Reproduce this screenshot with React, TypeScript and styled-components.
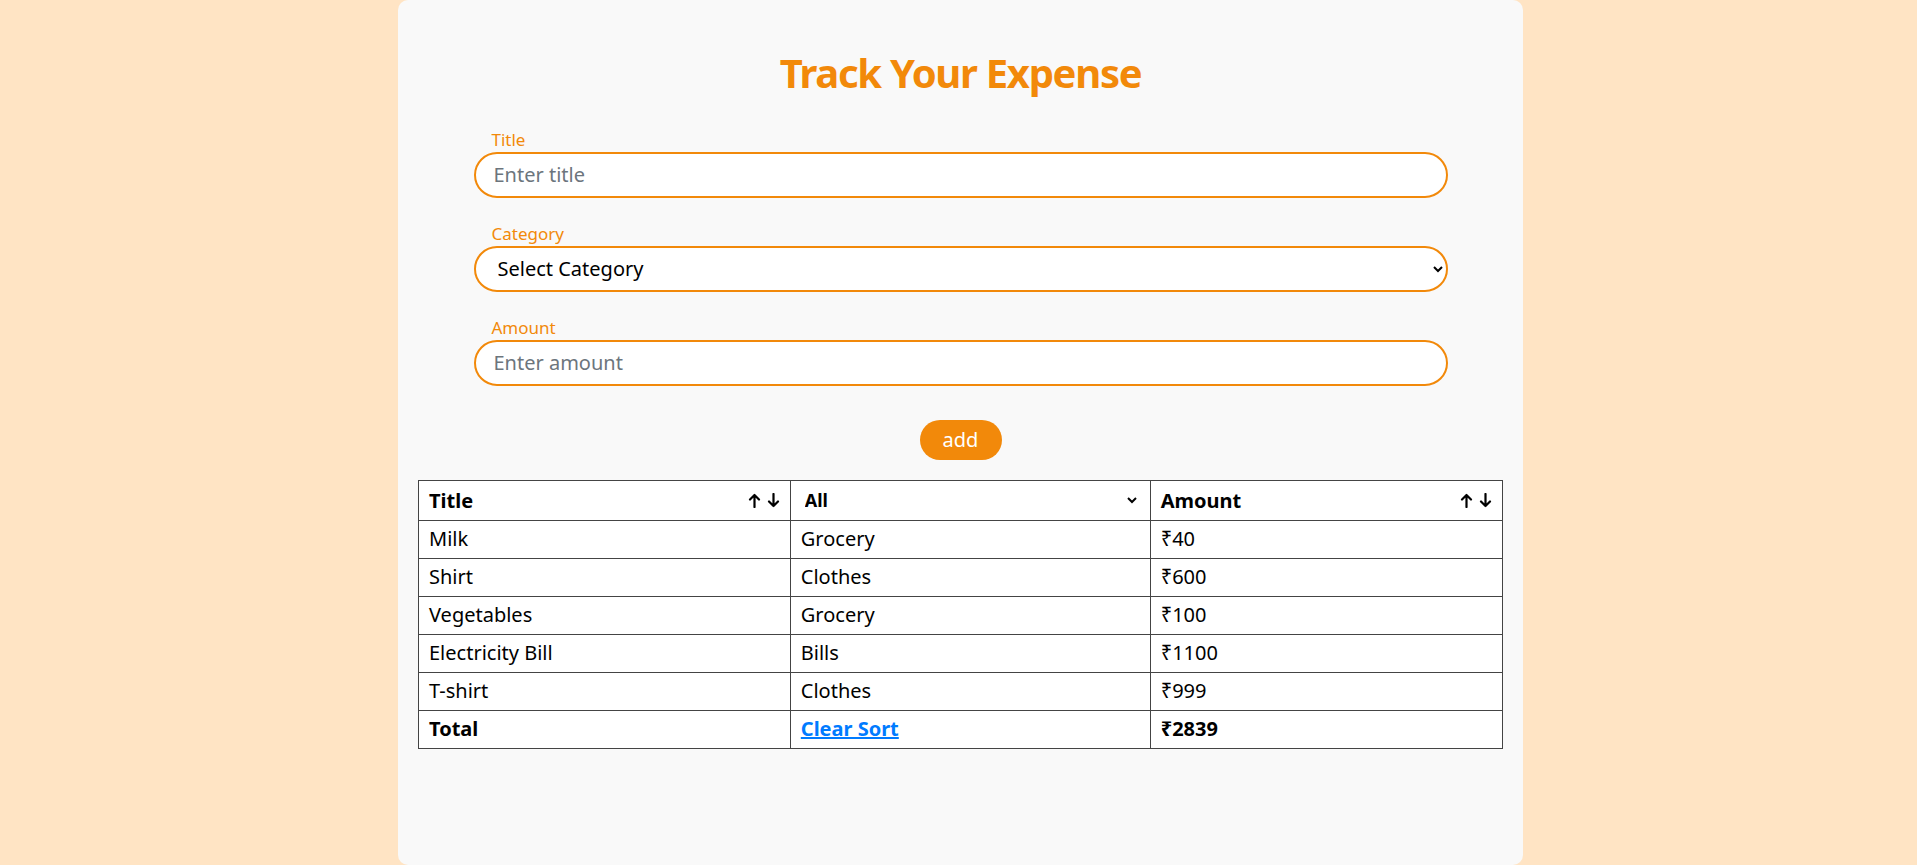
import React from "react";
import styled, { createGlobalStyle } from "styled-components";

interface Expense {
  id: number;
  title: string;
  category: string;
  amount: number;
}

const expenses: Expense[] = [
  { id: 1, title: "Milk", category: "Grocery", amount: 40 },
  { id: 2, title: "Shirt", category: "Clothes", amount: 600 },
  { id: 3, title: "Vegetables", category: "Grocery", amount: 100 },
  { id: 4, title: "Electricity Bill", category: "Bills", amount: 1100 },
  { id: 5, title: "T-shirt", category: "Clothes", amount: 999 },
];

const ORANGE = "#f2890a";

const GlobalStyle = createGlobalStyle`
  body {
    margin: 0;
    padding-left: 4px;
    background: #ffe4c4;
    font-family: "Noto Sans", "DejaVu Sans", sans-serif;
  }
  * {
    box-sizing: border-box;
  }
`;

const SortArrows = () => (
  <Arrows>
    <svg width="13" height="15" viewBox="0 0 13 15" fill="none" stroke="#000" strokeWidth="2.2" strokeLinecap="round" strokeLinejoin="round">
      <path d="M6.5 14V2M2 6.5L6.5 2L11 6.5" />
    </svg>
    <svg width="13" height="15" viewBox="0 0 13 15" fill="none" stroke="#000" strokeWidth="2.2" strokeLinecap="round" strokeLinejoin="round">
      <path d="M6.5 1v12M2 8.5L6.5 13L11 8.5" />
    </svg>
  </Arrows>
);

const App: React.FC = () => {
  const total = expenses.reduce((sum, e) => sum + e.amount, 0);

  return (
    <>
      <GlobalStyle />
      <Container>
        <Heading>Track Your Expense</Heading>
        <Form onSubmit={(e) => e.preventDefault()}>
          <Field>
            <Label htmlFor="title">Title</Label>
            <Input id="title" placeholder="Enter title" />
          </Field>
          <Field>
            <Label htmlFor="category">Category</Label>
            <Select id="category" defaultValue="">
              <option value="" hidden>
                Select Category
              </option>
              <option value="Grocery">Grocery</option>
              <option value="Clothes">Clothes</option>
              <option value="Bills">Bills</option>
              <option value="Education">Education</option>
              <option value="Medicine">Medicine</option>
            </Select>
          </Field>
          <Field>
            <Label htmlFor="amount">Amount</Label>
            <Input id="amount" placeholder="Enter amount" />
          </Field>
          <AddButton type="submit">add</AddButton>
        </Form>

        <Table>
          <colgroup>
            <col style={{ width: "34.3%" }} />
            <col style={{ width: "33.2%" }} />
            <col style={{ width: "32.5%" }} />
          </colgroup>
          <thead>
            <tr>
              <HeadCell>
                <HeadInner>
                  <span>Title</span>
                  <SortArrows />
                </HeadInner>
              </HeadCell>
              <HeadCell>
                <HeadInner>
                  <FilterSelect defaultValue="">
                    <option value="">All</option>
                    <option value="Grocery">Grocery</option>
                    <option value="Clothes">Clothes</option>
                    <option value="Bills">Bills</option>
                  </FilterSelect>
                </HeadInner>
              </HeadCell>
              <HeadCell>
                <HeadInner>
                  <span>Amount</span>
                  <SortArrows />
                </HeadInner>
              </HeadCell>
            </tr>
          </thead>
          <tbody>
            {expenses.map((e) => (
              <tr key={e.id}>
                <Cell>{e.title}</Cell>
                <Cell>{e.category}</Cell>
                <Cell>₹{e.amount}</Cell>
              </tr>
            ))}
            <tr>
              <Cell $bold>Total</Cell>
              <Cell $bold>
                <ClearLink href="#">Clear Sort</ClearLink>
              </Cell>
              <Cell $bold>₹{total}</Cell>
            </tr>
          </tbody>
        </Table>
      </Container>
    </>
  );
};

const Container = styled.div`
  width: 1125px;
  min-height: 100vh;
  margin: 0 auto;
  padding: 20px;
  background: #f9f9f9;
  border-radius: 10px;
`;

const Heading = styled.h1`
  margin: 24.5px 0 28px;
  text-align: center;
  font-size: 40px;
  font-weight: 700;
  letter-spacing: -1.3px;
  color: ${ORANGE};
`;

const Form = styled.form`
  width: 974px;
  margin: 0 auto;
  display: flex;
  flex-direction: column;
`;

const Field = styled.div`
  display: flex;
  flex-direction: column;
  margin-bottom: 24px;
`;

const Label = styled.label`
  font-size: 17px;
  color: ${ORANGE};
  padding-left: 18px;
  margin-bottom: 1px;
`;

const Input = styled.input`
  height: 46px;
  padding: 0 18px;
  border: 2px solid ${ORANGE};
  border-radius: 23px;
  background: #fff;
  font-family: inherit;
  font-size: 20px;
  color: #000;
  outline: none;

  &::placeholder {
    color: #6c757d;
  }
`;

const Select = styled.select`
  height: 46px;
  padding: 0 4px 0 18px;
  border: 2px solid ${ORANGE};
  border-radius: 23px;
  background: #fff;
  font-family: inherit;
  font-size: 20px;
  color: #000;
  outline: none;
`;

const AddButton = styled.button`
  align-self: center;
  width: 82px;
  height: 40px;
  margin: 10px 0 20px;
  border: none;
  border-radius: 20px;
  background: ${ORANGE};
  color: #fff;
  font-family: inherit;
  font-size: 20px;
  cursor: pointer;
`;

const Table = styled.table`
  width: 100%;
  border-collapse: collapse;
  table-layout: fixed;
  background: #fff;
  border: 1px solid #444;
`;

const HeadCell = styled.th`
  padding: 5px 10px;
  border: 1px solid #444;
  text-align: left;
  font-size: 20px;
  font-weight: 700;
`;

const HeadInner = styled.div`
  display: flex;
  align-items: center;
  justify-content: space-between;
  height: 29px;
`;

const Arrows = styled.span`
  display: flex;
  align-items: center;
  gap: 6px;
`;

const FilterSelect = styled.select`
  width: 100%;
  padding: 0;
  border: none;
  background: transparent;
  font-family: inherit;
  font-size: 18px;
  font-weight: 700;
  color: #000;
  outline: none;
`;

const Cell = styled.td<{ $bold?: boolean }>`
  padding: 4px 10px 6px;
  border: 1px solid #444;
  font-size: 20px;
  font-weight: ${({ $bold }) => ($bold ? 700 : 400)};
  color: #000;
`;

const ClearLink = styled.a`
  color: #007bff;
  font-weight: 700;
  text-decoration: underline;
`;

export default App;
